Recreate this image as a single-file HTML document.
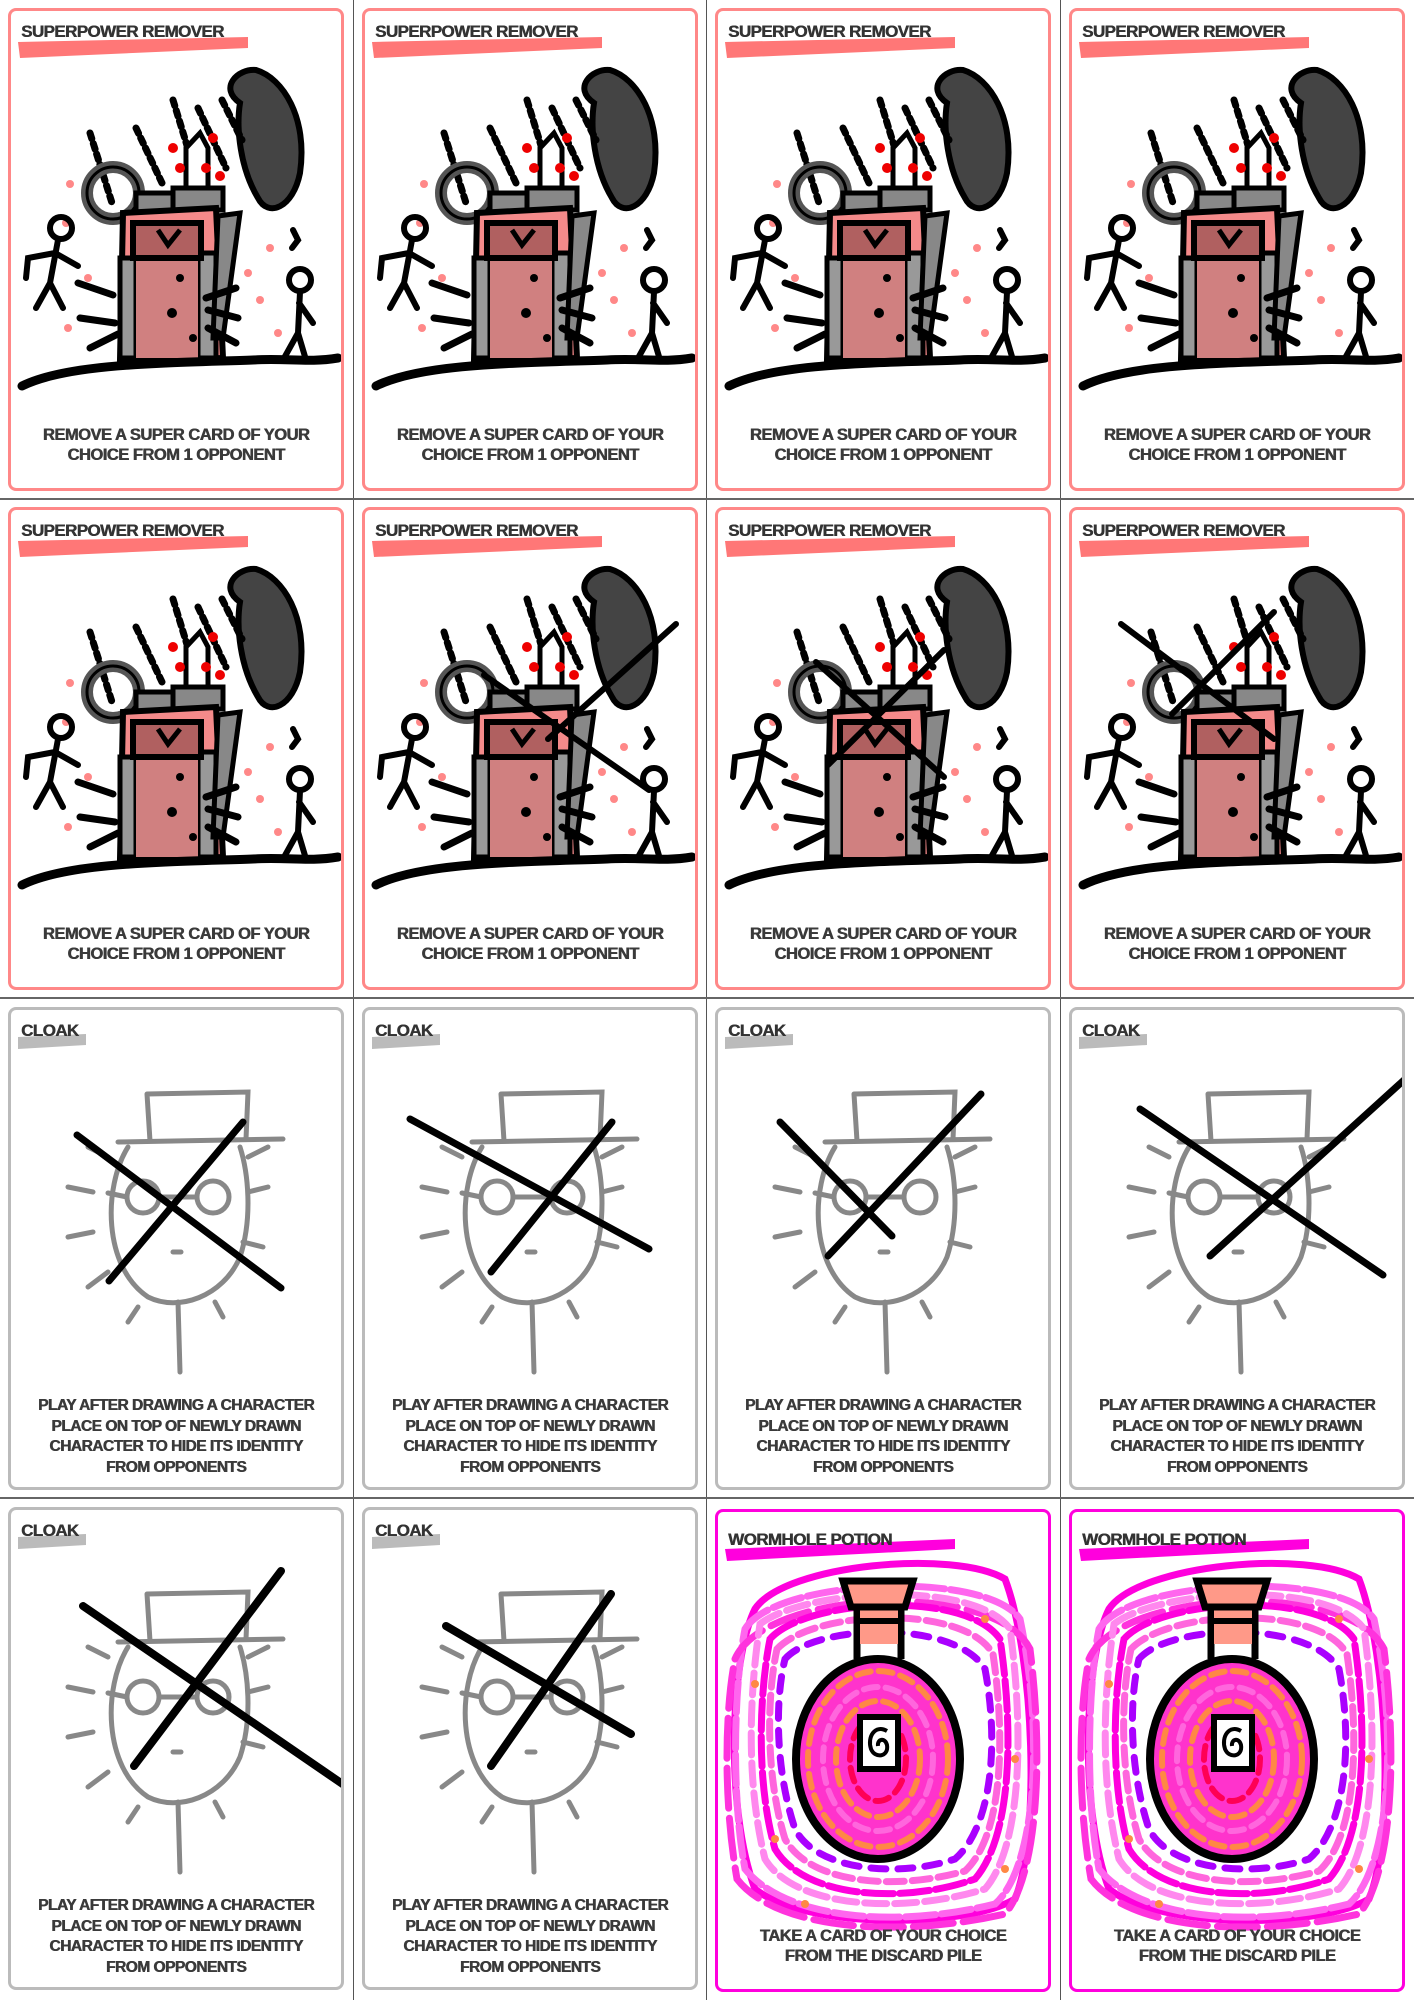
<!DOCTYPE html>
<html><head><meta charset="utf-8">
<style>
html,body{margin:0;padding:0;background:#fff;}
body{width:1414px;height:2000px;position:relative;overflow:hidden;font-family:"Liberation Sans",Arial,sans-serif;}
.vl{position:absolute;top:0;width:1px;height:2000px;background:#555;}
.hl{position:absolute;left:0;height:2px;width:1414px;background:#666;}
.card{position:absolute;width:336px;height:483px;box-sizing:border-box;border:3px solid #f88;border-radius:8px;background:#fff;overflow:hidden;}
.card.cl{border-color:#bbb;}
.card.wh{border-color:#f0d;}
.card svg{position:absolute;left:-3px;top:-3px;}
.title{position:absolute;left:10px;top:11px;font-weight:bold;font-size:17px;color:#333;letter-spacing:-0.6px;z-index:2;text-shadow:0.5px 0 0 #333;}
.body{position:absolute;left:0;right:0;text-align:center;font-weight:bold;color:#3a3a3a;letter-spacing:-0.5px;z-index:2;text-shadow:0.6px 0 0 #3a3a3a;}
.sp .body{top:414px;font-size:16.5px;line-height:20px;}
.cl .body{top:386px;font-size:15.5px;line-height:20.5px;}
.wh .body{top:414px;font-size:16.5px;line-height:20px;}
</style></head><body>
<svg width="0" height="0" style="position:absolute">
<defs>
<symbol id="tower" viewBox="0 0 336 483">
 <path d="M10 34 L240 29 L240 40 L12 50 Z" fill="#f77"/>
 <g fill="#f88"><circle cx="62" cy="176" r="4"/><circle cx="58" cy="215" r="4"/><circle cx="80" cy="270" r="4"/><circle cx="60" cy="320" r="4"/><circle cx="262" cy="240" r="4"/><circle cx="252" cy="292" r="4"/><circle cx="270" cy="325" r="4"/><circle cx="240" cy="265" r="4"/></g>
 <path d="M232 95 C210 80 230 60 248 62 C275 70 300 110 292 165 C285 200 260 210 250 190 C232 160 228 120 232 95Z" fill="#444" stroke="#000" stroke-width="6"/>
 <path d="M214 92 l20 40 M190 100 l28 60 M165 92 l20 65 M128 120 l26 55 M82 125 l22 70" stroke="#000" stroke-width="7" stroke-linecap="round" stroke-dasharray="6 5"/>
 <circle cx="105" cy="185" r="26" fill="none" stroke="#555" stroke-width="12"/>
 <circle cx="105" cy="185" r="26" fill="none" stroke="#000" stroke-width="3"/>
 <path d="M178 180 L178 140 L192 125 L200 140 L200 180" fill="#fff" stroke="#000" stroke-width="5"/>
 <g fill="#e00"><circle cx="165" cy="140" r="5"/><circle cx="172" cy="160" r="5"/><circle cx="198" cy="160" r="5"/><circle cx="212" cy="168" r="5"/><circle cx="205" cy="130" r="5"/></g>
 <rect x="128" y="185" width="62" height="20" fill="#888" stroke="#000" stroke-width="5"/>
 <rect x="165" y="180" width="50" height="22" fill="#888" stroke="#000" stroke-width="5"/>
 <path d="M115 205 L208 200 L215 350 L112 352Z" fill="#f48a8a" stroke="#000" stroke-width="6"/>
 <rect x="112" y="250" width="16" height="100" fill="#999" stroke="#000" stroke-width="5"/>
 <rect x="190" y="245" width="18" height="105" fill="#999" stroke="#000" stroke-width="5"/>
 <path d="M210 208 L232 205 L215 330 L205 330Z" fill="#888" stroke="#000" stroke-width="5"/>
 <rect x="128" y="250" width="62" height="100" fill="#d08080"/>
 <rect x="125" y="215" width="68" height="35" fill="#b06060" stroke="#000" stroke-width="6"/>
 <path d="M150 222 l10 15 l12 -15" fill="none" stroke="#000" stroke-width="5"/>
 <g fill="#000"><circle cx="172" cy="270" r="4"/><circle cx="164" cy="305" r="5"/><circle cx="185" cy="330" r="4"/></g>
 <path d="M70 275 l35 12 M72 310 l35 5 M82 340 l28 -14 M228 280 l-30 10 M230 310 l-30 -8 M228 335 l-28 -15" stroke="#000" stroke-width="7" stroke-linecap="round"/>
 <path d="M14 378 C60 355 160 355 245 352 C280 350 300 355 330 350" fill="none" stroke="#000" stroke-width="9" stroke-linecap="round"/>
 <g stroke="#000" stroke-width="6" fill="none" stroke-linecap="round"><circle cx="53" cy="220" r="11"/><path d="M50 232 L42 275 L28 300 M42 275 L55 300 M47 245 L70 258 M47 245 L20 250 L18 270"/>
 <circle cx="292" cy="272" r="11"/><path d="M292 284 L290 325 L275 352 M290 325 L298 352 M291 295 L305 315 M285 222 l5 10 l-6 8"/></g>
</symbol>
<symbol id="cloak" viewBox="0 0 336 483">
 <path d="M10 30 L78 27 L78 38 L10 42 Z" fill="#bbb"/>
 <g fill="none" stroke="#888" stroke-width="5" stroke-linecap="round">
 <path d="M139 87 L240 85 L238 132 M139 87 L142 134"/>
 <path d="M110 135 L275 132"/>
 <path d="M120 140 C95 180 95 260 140 290 C170 305 215 290 232 250 C245 210 240 165 232 140"/>
 <circle cx="135" cy="190" r="16"/><circle cx="205" cy="190" r="16"/><path d="M151 190 L189 190 M119 190 L100 186"/>
 <path d="M165 245 l8 0" />
 <path d="M170 295 L172 365"/>
 <path d="M60 180 l25 5 M60 230 l25 -5 M80 280 l20 -15 M120 315 l10 -15 M215 310 l-8 -15 M260 180 l-20 5 M255 240 l-20 -5 M80 140 l20 10 M260 140 l-20 10"/>
 </g>
</symbol>
<symbol id="worm" viewBox="0 0 336 483">
 <path d="M10 40 L240 30 L240 40 L12 52 Z" fill="#f0d"/>
 <g fill="none" stroke-width="7" stroke-linecap="round">
 <path d="M40 100 C70 55 240 40 290 70 C320 150 325 330 300 390 C250 420 90 420 40 380 C10 300 15 150 40 100Z" stroke="#f0d"/>
 <path d="M30 120 C60 70 270 60 305 110 C330 230 320 360 280 395 C180 420 70 410 30 360 C15 280 20 170 30 120Z" stroke="#f6e" stroke-dasharray="30 6"/>
 <path d="M20 150 C50 80 280 70 315 140 C330 260 320 370 290 405 C180 430 60 420 22 370 C8 290 10 200 20 150Z" stroke="#f3d" stroke-dasharray="40 10"/>
 <path d="M55 130 C90 90 250 80 285 130 C300 230 295 330 260 370 C190 395 90 390 60 340 C40 270 45 180 55 130Z" stroke="#f0d" stroke-dasharray="30 6"/>
 <path d="M45 115 C90 80 260 70 295 120 C310 230 305 340 270 380 C190 405 80 400 50 350 C30 270 35 180 45 115Z" stroke="#f8e" stroke-dasharray="22 8"/>
 <path d="M70 150 C100 115 240 110 270 160 C285 240 275 320 240 350 C180 370 100 360 80 320 C60 260 60 190 70 150Z" stroke="#a0f" stroke-dasharray="15 12"/>
 <path d="M62 140 C100 100 250 95 278 145 C292 240 285 330 250 362 C180 382 95 375 70 330 C50 265 52 185 62 140Z" stroke="#f6d" stroke-dasharray="18 8"/>
 </g>
 <g fill="#f84"><circle cx="40" cy="175" r="4"/><circle cx="300" cy="250" r="4"/><circle cx="60" cy="330" r="4"/><circle cx="270" cy="110" r="4"/><circle cx="290" cy="360" r="4"/><circle cx="90" cy="395" r="4"/></g>
 <ellipse cx="163" cy="250" rx="82" ry="100" fill="#f3c"/>
 <g fill="none" stroke-width="6" stroke-linecap="round" stroke-dasharray="14 8">
 <ellipse cx="163" cy="250" rx="70" ry="88" stroke="#f84"/>
 <ellipse cx="163" cy="250" rx="55" ry="72" stroke="#f6d"/>
 <ellipse cx="163" cy="250" rx="42" ry="58" stroke="#f84"/>
 <ellipse cx="163" cy="250" rx="28" ry="42" stroke="#f05"/>
 </g>
 <ellipse cx="163" cy="250" rx="82" ry="100" fill="none" stroke="#000" stroke-width="8"/>
 <path d="M142 100 L142 150 M186 100 L186 150" stroke="#000" stroke-width="7"/>
 <rect x="145" y="95" width="38" height="40" fill="#f98"/>
 <path d="M128 72 L198 72 L190 98 L136 98Z" fill="#f98" stroke="#000" stroke-width="7"/>
 <path d="M140 112 L188 112" stroke="#000" stroke-width="6"/>
 <rect x="145" y="208" width="38" height="52" fill="#fff" stroke="#000" stroke-width="6"/>
 <path d="M172 222 C160 215 152 228 156 240 C160 250 174 248 172 236 C170 228 162 230 163 237" fill="none" stroke="#000" stroke-width="4"/>
</symbol>
</defs></svg>

<div class="vl" style="left:353px"></div><div class="vl" style="left:706px"></div><div class="vl" style="left:1060px"></div>
<div class="hl" style="top:498px"></div><div class="hl" style="top:997px"></div><div class="hl" style="top:1497px"></div>

<!-- Row 1 -->
<div class="card sp" style="left:8px;top:8px"><svg width="336" height="483"><use href="#tower"/></svg><div class="title">SUPERPOWER REMOVER</div><div class="body">REMOVE A SUPER CARD OF YOUR<br>CHOICE FROM 1 OPPONENT</div></div>
<div class="card sp" style="left:362px;top:8px"><svg width="336" height="483"><use href="#tower"/></svg><div class="title">SUPERPOWER REMOVER</div><div class="body">REMOVE A SUPER CARD OF YOUR<br>CHOICE FROM 1 OPPONENT</div></div>
<div class="card sp" style="left:715px;top:8px"><svg width="336" height="483"><use href="#tower"/></svg><div class="title">SUPERPOWER REMOVER</div><div class="body">REMOVE A SUPER CARD OF YOUR<br>CHOICE FROM 1 OPPONENT</div></div>
<div class="card sp" style="left:1069px;top:8px"><svg width="336" height="483"><use href="#tower"/></svg><div class="title">SUPERPOWER REMOVER</div><div class="body">REMOVE A SUPER CARD OF YOUR<br>CHOICE FROM 1 OPPONENT</div></div>

<!-- Row 2 -->
<div class="card sp" style="left:8px;top:507px"><svg width="336" height="483"><use href="#tower"/></svg><div class="title">SUPERPOWER REMOVER</div><div class="body">REMOVE A SUPER CARD OF YOUR<br>CHOICE FROM 1 OPPONENT</div></div>
<div class="card sp" style="left:362px;top:507px"><svg width="336" height="483"><use href="#tower"/><path d="M122 168 L287 283 M314 117 L186 232" stroke="#000" stroke-width="6" stroke-linecap="round"/></svg><div class="title">SUPERPOWER REMOVER</div><div class="body">REMOVE A SUPER CARD OF YOUR<br>CHOICE FROM 1 OPPONENT</div></div>
<div class="card sp" style="left:715px;top:507px"><svg width="336" height="483"><use href="#tower"/><path d="M101 155 L229 270 M229 143 L113 258" stroke="#000" stroke-width="6" stroke-linecap="round"/></svg><div class="title">SUPERPOWER REMOVER</div><div class="body">REMOVE A SUPER CARD OF YOUR<br>CHOICE FROM 1 OPPONENT</div></div>
<div class="card sp" style="left:1069px;top:507px"><svg width="336" height="483"><use href="#tower"/><path d="M52 117 L205 232 M205 105 L103 207" stroke="#000" stroke-width="6" stroke-linecap="round"/></svg><div class="title">SUPERPOWER REMOVER</div><div class="body">REMOVE A SUPER CARD OF YOUR<br>CHOICE FROM 1 OPPONENT</div></div>

<!-- Row 3 -->
<div class="card cl" style="left:8px;top:1007px"><svg width="336" height="483"><use href="#cloak"/><path d="M69 128 L273 281 M235 115 L101 274" stroke="#000" stroke-width="7" stroke-linecap="round"/></svg><div class="title">CLOAK</div><div class="body">PLAY AFTER DRAWING A CHARACTER<br>PLACE ON TOP OF NEWLY DRAWN<br>CHARACTER TO HIDE ITS IDENTITY<br>FROM OPPONENTS</div></div>
<div class="card cl" style="left:362px;top:1007px"><svg width="336" height="483"><use href="#cloak"/><path d="M48 112 L287 242 M250 115 L129 265" stroke="#000" stroke-width="7" stroke-linecap="round"/></svg><div class="title">CLOAK</div><div class="body">PLAY AFTER DRAWING A CHARACTER<br>PLACE ON TOP OF NEWLY DRAWN<br>CHARACTER TO HIDE ITS IDENTITY<br>FROM OPPONENTS</div></div>
<div class="card cl" style="left:715px;top:1007px"><svg width="336" height="483"><use href="#cloak"/><path d="M65 115 L177 229 M266 87 L113 249" stroke="#000" stroke-width="7" stroke-linecap="round"/></svg><div class="title">CLOAK</div><div class="body">PLAY AFTER DRAWING A CHARACTER<br>PLACE ON TOP OF NEWLY DRAWN<br>CHARACTER TO HIDE ITS IDENTITY<br>FROM OPPONENTS</div></div>
<div class="card cl" style="left:1069px;top:1007px"><svg width="336" height="483"><use href="#cloak"/><path d="M71 102 L314 268 M345 64 L141 249" stroke="#000" stroke-width="7" stroke-linecap="round"/></svg><div class="title">CLOAK</div><div class="body">PLAY AFTER DRAWING A CHARACTER<br>PLACE ON TOP OF NEWLY DRAWN<br>CHARACTER TO HIDE ITS IDENTITY<br>FROM OPPONENTS</div></div>

<!-- Row 4 -->
<div class="card cl" style="left:8px;top:1507px"><svg width="336" height="483"><use href="#cloak"/><path d="M75 99 L336 278 M273 64 L126 259" stroke="#000" stroke-width="8" stroke-linecap="round"/></svg><div class="title">CLOAK</div><div class="body">PLAY AFTER DRAWING A CHARACTER<br>PLACE ON TOP OF NEWLY DRAWN<br>CHARACTER TO HIDE ITS IDENTITY<br>FROM OPPONENTS</div></div>
<div class="card cl" style="left:362px;top:1507px"><svg width="336" height="483"><use href="#cloak"/><path d="M84 119 L269 227 M249 87 L129 259" stroke="#000" stroke-width="8" stroke-linecap="round"/></svg><div class="title">CLOAK</div><div class="body">PLAY AFTER DRAWING A CHARACTER<br>PLACE ON TOP OF NEWLY DRAWN<br>CHARACTER TO HIDE ITS IDENTITY<br>FROM OPPONENTS</div></div>
<div class="card wh" style="left:715px;top:1509px"><svg width="336" height="483"><use href="#worm"/></svg><div class="title" style="top:18px">WORMHOLE POTION</div><div class="body">TAKE A CARD OF YOUR CHOICE<br>FROM THE DISCARD PILE</div></div>
<div class="card wh" style="left:1069px;top:1509px"><svg width="336" height="483"><use href="#worm"/></svg><div class="title" style="top:18px">WORMHOLE POTION</div><div class="body">TAKE A CARD OF YOUR CHOICE<br>FROM THE DISCARD PILE</div></div>
</body></html>
